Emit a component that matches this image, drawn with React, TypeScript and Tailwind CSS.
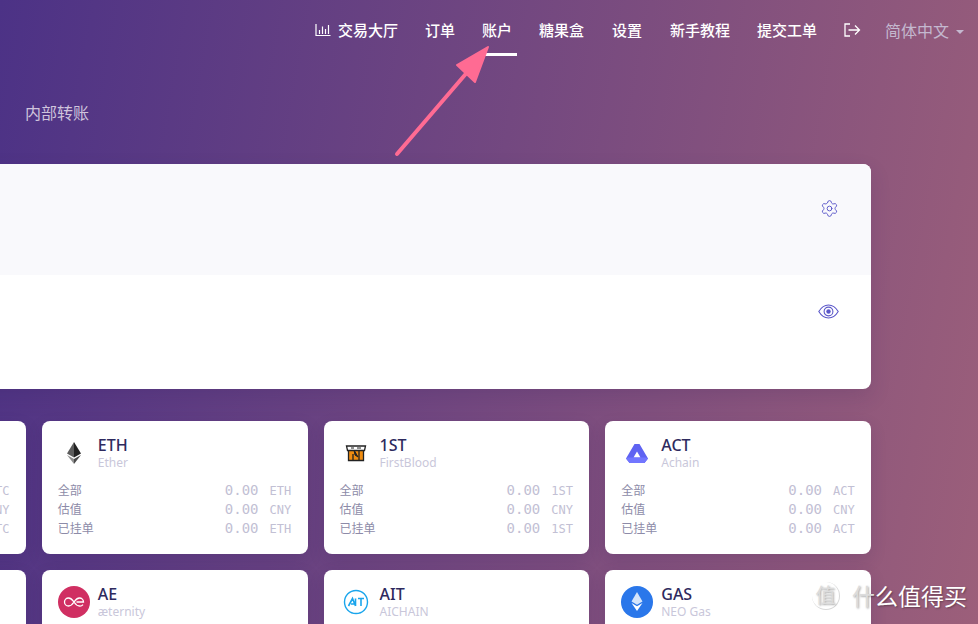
import { Settings } from 'lucide-react'

const cjk = "font-['Noto_Sans','Noto_Sans_CJK_SC',sans-serif]"

function ChartIcon() {
  return (
    <svg width="16" height="14" viewBox="0 0 16 14" fill="none" stroke="currentColor" strokeWidth="1.2" className="mr-[7px]">
      <path d="M1 1v11.5h14.5" />
      <path d="M4.5 11V7M7.5 11V3.5M10.5 11V6M13.5 11V2" />
    </svg>
  )
}

function LogoutIcon() {
  return (
    <svg width="17" height="14" viewBox="0 0 17 14" fill="none" stroke="currentColor" strokeWidth="1.3">
      <path d="M6 1H1v12h5" />
      <path d="M4.5 7H15.5M11 2.5 15.5 7 11 11.5" />
    </svg>
  )
}

function EyeIcon() {
  return (
    <svg width="21" height="15" viewBox="0 0 21 15" fill="none" stroke="#5b57c9" strokeWidth="1.1">
      <path d="M0.8 7.5C3.5 3 7 1 10.5 1s7 2 9.7 6.5C17.5 12 14 14 10.5 14S3.5 12 0.8 7.5Z" />
      <circle cx="10.5" cy="7.5" r="4.4" />
      <circle cx="10.5" cy="7.5" r="2.2" fill="#5b57c9" stroke="none" />
    </svg>
  )
}

const nav = ['订单', '账户', '糖果盒']
const navRight = ['设置', '新手教程']

function EthLogo() {
  return (
    <svg width="32" height="32" viewBox="0 0 32 32">
      <path d="M16 5 9 16.500 16 20.500Z" fill="#5c5c5c" />
      <path d="M16 5 23 16.500 16 20.500Z" fill="#222" />
      <path d="M9 18 16 22V27Z" fill="#8f8f8f" />
      <path d="M23 18 16 22V27Z" fill="#4a4a4a" />
    </svg>
  )
}

function FirstBloodLogo() {
  return (
    <svg width="32" height="32" viewBox="0 0 32 32">
      <path d="M8 13h16v10.500H8Z" fill="#f08c10" />
      <path d="M6.500 9h19l-1 4.500H7.500Z" fill="#fff" stroke="#222" strokeWidth="1.300" />
      <path d="M8.500 13v10.500h15V13M13 17v6M19 13v10" fill="none" stroke="#222" strokeWidth="1.300" />
      <path d="M11 11h3M17 11h4M14 13l4 7-3-2Z" stroke="#222" strokeWidth="1" fill="#222" />
    </svg>
  )
}

function AchainLogo() {
  return (
    <svg width="32" height="32" viewBox="0 0 32 32">
      <path d="M13.500 7h5L27 21.500 23.500 26H8.500L5 21.500Z M16 14.500 12.500 20.500h7Z" fill="#5f63f2" fillRule="evenodd" />
      <path d="M5 21.500 8.500 26H23.500L27 21.500 25 20.500H7Z" fill="#7276ff" />
    </svg>
  )
}

function AeLogo() {
  return (
    <svg width="32" height="32" viewBox="0 0 32 32">
      <circle cx="16" cy="16" r="16" fill="#d02f62" />
      <path d="M16 16c-2-3-3.600-4-5.500-4a4 4 0 0 0 0 8c1.900 0 3.500-1 5.500-4s3.600-4 5.500-4a4 4 0 0 1 4 4h-7M25 18.600a4 4 0 0 1-3.500 1.400c-1.900 0-3.500-1-5.500-4" fill="none" stroke="#fff" strokeWidth="1.300" />
    </svg>
  )
}

function AitLogo() {
  return (
    <svg width="32" height="32" viewBox="0 0 32 32" fill="none" stroke="#19a5ec">
      <circle cx="16" cy="16" r="11.500" strokeWidth="1.400" />
      <path d="M8.500 20 12.500 12.500 15.500 20M11 18h3M15.500 12.500V20M18 12.500h6M21 12.500V20" strokeWidth="1.600" />
    </svg>
  )
}

function GasLogo() {
  return (
    <svg width="32" height="32" viewBox="0 0 32 32">
      <circle cx="16" cy="16" r="16" fill="#2a77ea" />
      <path d="M16 6 10.500 15.500 16 18.700 21.500 15.500Z" fill="#d5e5fb" />
      <path d="M10.500 17 16 20.300 21.500 17 16 25Z" fill="#fff" />
    </svg>
  )
}

const coins = [
  { sym: 'BTC', name: 'Bitcoin', logo: null },
  { sym: 'ETH', name: 'Ether', logo: <EthLogo /> },
  { sym: '1ST', name: 'FirstBlood', logo: <FirstBloodLogo /> },
  { sym: 'ACT', name: 'Achain', logo: <AchainLogo /> },
  { sym: 'ADA', name: 'Cardano', logo: null },
  { sym: 'AE', name: 'æternity', logo: <AeLogo /> },
  { sym: 'AIT', name: 'AICHAIN', logo: <AitLogo /> },
  { sym: 'GAS', name: 'NEO Gas', logo: <GasLogo /> },
]

function Row({ label, unit }: { label: string; unit: string }) {
  return (
    <div className="flex h-[19px] items-center">
      <span className={`text-[12px] text-[#8d8ba8] ${cjk}`}>{label}</span>
      <span className="ml-auto font-['DejaVu_Sans_Mono',monospace] text-[14px] text-[#c2c0d4]">0.00</span>
      <span className="ml-[11px] w-[22px] font-['DejaVu_Sans_Mono',monospace] text-[12px] whitespace-nowrap text-[#c2c0d4]">{unit}</span>
    </div>
  )
}

function CoinCard({ sym, name, logo }: { sym: string; name: string; logo: React.ReactNode }) {
  return (
    <div className="h-[133px] rounded-lg bg-white px-[16px] pt-[16px] shadow-[0_6px_16px_rgba(50,30,90,0.15)]">
      <div className="flex h-[32px] items-center">
        <div className="h-[32px] w-[32px] shrink-0">{logo}</div>
        <div className="ml-[8px] pt-[1px]">
          <p className="font-['Noto_Sans',sans-serif] text-[16px] leading-[18px] font-medium text-[#2e2a5e]">{sym}</p>
          <p className="font-['Noto_Sans',sans-serif] text-[12px] leading-[17px] text-[#c9c7da]">{name}</p>
        </div>
      </div>
      <div className="mt-[12px]">
        <Row label="全部" unit={sym} />
        <Row label="估值" unit="CNY" />
        <Row label="已挂单" unit={sym} />
      </div>
    </div>
  )
}

export default function App() {
  return (
    <div className={`relative h-[624px] w-[978px] overflow-hidden bg-[linear-gradient(100deg,#4c3286,#9c5f7a)] ${cjk}`}>
      {/* top nav */}
      <nav className="flex h-[60px] items-center justify-end gap-[27px] pr-[14px] text-[15px] font-medium text-white">
        <a className="flex items-center">
          <ChartIcon />
          交易大厅
        </a>
        {nav.map(item => (
          <a key={item} className="relative whitespace-nowrap">
            {item}
            {item === '账户' && <span className="absolute top-[34px] left-0 h-[3px] w-[35px] bg-white" />}
          </a>
        ))}
        {navRight.map(item => (
          <a key={item} className="ml-[1px] whitespace-nowrap">
            {item}
          </a>
        ))}
        <a className="whitespace-nowrap">提交工单</a>
        <LogoutIcon />
        <div className="ml-[-3px] flex items-center pt-[2px] text-[16px] font-normal text-[#c4b8cf]">
          简体中文
          <span className="mt-[1px] ml-[7px] h-0 w-0 border-x-[4px] border-t-[4px] border-x-transparent border-t-[#c4b8cf]" />
        </div>
      </nav>

      <div className="mt-[42px] ml-[25px] text-[16px] leading-[22px] text-[#cfc4dc]">内部转账</div>

      {/* overview panel */}
      <div className="mt-[40px] ml-[-240px] w-[1111px]">
        <div className="overflow-hidden rounded-lg bg-white shadow-[0_8px_20px_rgba(50,30,90,0.15)]">
          <div className="flex h-[111px] items-start justify-end bg-[#f9f9fc] pt-[35px] pr-[32px]">
            <Settings size={19} strokeWidth={1.200} className="text-[#5b57c9]" />
          </div>
          <div className="flex h-[114px] items-start justify-end pt-[29px] pr-[32px]">
            <EyeIcon />
          </div>
        </div>

        <div className="mt-[32px] grid grid-cols-4 gap-x-[16px] gap-y-[16px]">
          {coins.map(c => (
            <CoinCard key={c.sym} {...c} />
          ))}
        </div>
      </div>

      {/* annotation arrow */}
      <svg className="absolute top-0 left-0" width="978" height="200" fill="none">
        <path d="M397 154 476 62" stroke="#ff6b93" strokeWidth="4" strokeLinecap="round" />
        <path d="M488 47 457 65 475 82Z" fill="#ff6b93" stroke="#ff6b93" strokeWidth="2" strokeLinejoin="round" />
      </svg>

      {/* watermark */}
      <div className="absolute top-[582px] left-[812px] flex items-center text-white [text-shadow:1px_1px_2px_rgba(0,0,0,0.35)]">
        <span className="flex h-[28px] w-[28px] items-center justify-center rounded-full border-r border-b border-[#d8d8d8] text-[20px] text-[#dcdcdc]">值</span>
        <span className="ml-[12px] text-[23px] leading-[28px]">
          <span className="text-[#dcdcdc]">什</span>么值得买
        </span>
      </div>
    </div>
  )
}
